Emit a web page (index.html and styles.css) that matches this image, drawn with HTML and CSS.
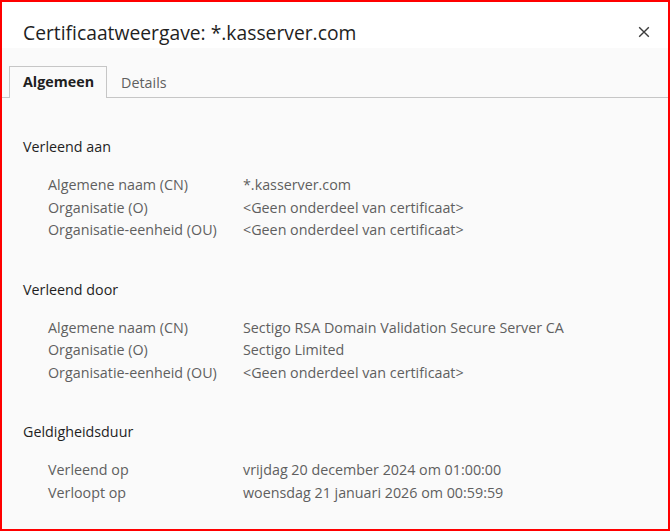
FILE: index.html
```html
<!DOCTYPE html>
<html lang="nl">
<head>
  <meta charset="UTF-8">
  <meta name="viewport" content="width=device-width, initial-scale=1.0">
  <title>Certificaatweergave</title>
  <link rel="stylesheet" href="styles.css">
</head>
<body>
  <div class="dialog">
    <div class="dialog-header">
      <h1>Certificaatweergave: *.kasserver.com</h1>
      <button class="close-button" aria-label="Sluiten">
        <svg viewBox="0 0 16 16" xmlns="http://www.w3.org/2000/svg">
          <path d="M2.5 2.5L13.5 13.5M13.5 2.5L2.5 13.5"/>
        </svg>
      </button>
    </div>

    <div class="tab-bar">
      <div class="tab active">Algemeen</div>
      <div class="tab">Details</div>
    </div>

    <div class="content">
      <section class="cert-section">
        <h2>Verleend aan</h2>
        <div class="field-list">
          <div class="field"><span class="field-label">Algemene naam (CN)</span><span class="field-value">*.kasserver.com</span></div>
          <div class="field"><span class="field-label">Organisatie (O)</span><span class="field-value">&lt;Geen onderdeel van certificaat&gt;</span></div>
          <div class="field"><span class="field-label">Organisatie-eenheid (OU)</span><span class="field-value">&lt;Geen onderdeel van certificaat&gt;</span></div>
        </div>
      </section>

      <section class="cert-section">
        <h2>Verleend door</h2>
        <div class="field-list">
          <div class="field"><span class="field-label">Algemene naam (CN)</span><span class="field-value">Sectigo RSA Domain Validation Secure Server CA</span></div>
          <div class="field"><span class="field-label">Organisatie (O)</span><span class="field-value">Sectigo Limited</span></div>
          <div class="field"><span class="field-label">Organisatie-eenheid (OU)</span><span class="field-value">&lt;Geen onderdeel van certificaat&gt;</span></div>
        </div>
      </section>

      <section class="cert-section">
        <h2>Geldigheidsduur</h2>
        <div class="field-list">
          <div class="field"><span class="field-label">Verleend op</span><span class="field-value">vrijdag 20 december 2024 om 01:00:00</span></div>
          <div class="field"><span class="field-label">Verloopt op</span><span class="field-value">woensdag 21 januari 2026 om 00:59:59</span></div>
        </div>
      </section>
    </div>
  </div>
</body>
</html>
```

FILE: styles.css
```css
* {
  margin: 0;
  padding: 0;
  box-sizing: border-box;
}

body {
  font-family: "Open Sans", "Noto Sans", sans-serif;
  background-color: #fafafa;
  color: #1f1f1f;
}

.dialog {
  width: 670px;
  height: 531px;
  border: 2px solid #ff0000;
  background-color: #fafafa;
  overflow: hidden;
}

.dialog-header {
  height: 46px;
  background-color: #ffffff;
  display: flex;
  align-items: center;
  justify-content: space-between;
  padding: 0 12px 0 21px;
}

.dialog-header h1 {
  font-size: 19.3px;
  font-weight: 400;
  color: #1f1f1f;
  padding-top: 14px;
}

.close-button {
  width: 24px;
  height: 24px;
  border: none;
  background: none;
  display: flex;
  align-items: center;
  justify-content: center;
  margin-top: 14px;
}

.close-button svg {
  width: 14px;
  height: 14px;
  stroke: #3c3c3c;
  stroke-width: 1.6;
  fill: none;
}

.tab-bar {
  display: flex;
  align-items: flex-end;
  height: 50px;
  padding-left: 7px;
  border-bottom: 1px solid #c6c6c6;
}

.tab {
  height: 31px;
  line-height: 30px;
  padding: 0 12px 0 13px;
  font-size: 14.3px;
  color: #5f5f5f;
  border: 1px solid transparent;
  border-bottom: none;
  margin-bottom: -1px;
}

.tab.active {
  font-weight: 700;
  color: #1f1f1f;
  border-color: #c6c6c6;
  background-color: #fafafa;
  height: 32px;
}

.content {
  padding: 38px 21px 0;
}

.cert-section {
  margin-bottom: 36.5px;
}

.cert-section h2 {
  font-size: 14.3px;
  font-weight: 400;
  color: #1f1f1f;
  line-height: 22px;
  margin-bottom: 16px;
}

.field-list {
  padding-left: 25px;
}

.field {
  display: flex;
  font-size: 14.3px;
  line-height: 22.7px;
  color: #5f5f5f;
}

.field-label {
  width: 195px;
  flex-shrink: 0;
}
```
